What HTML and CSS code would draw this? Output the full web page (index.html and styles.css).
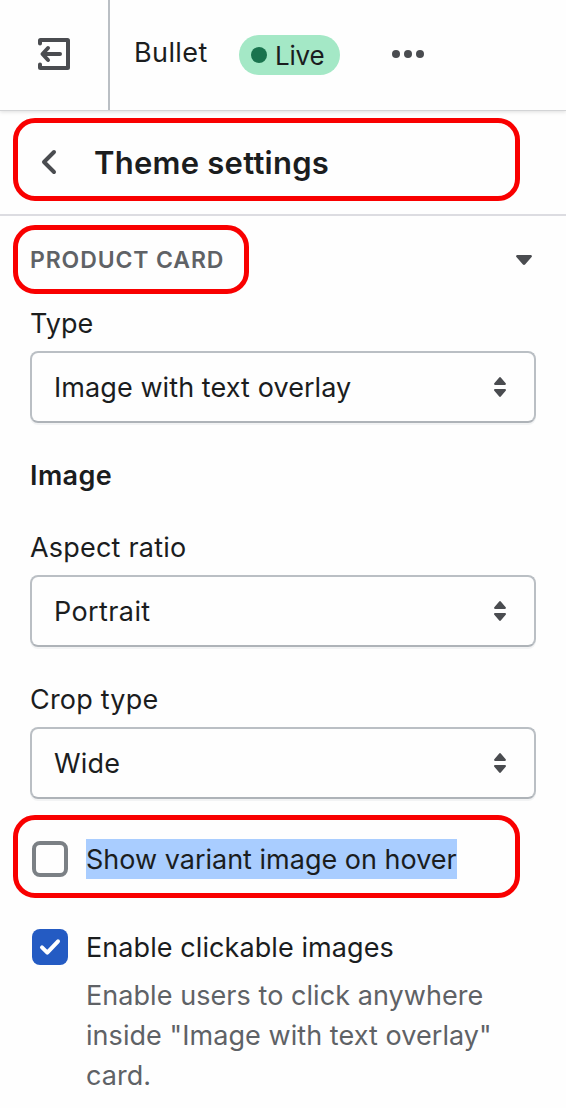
FILE: index.html
```html
<!DOCTYPE html>
<html lang="en">
<head>
<meta charset="utf-8">
<title>Theme settings</title>
<link rel="stylesheet" href="styles.css">
</head>
<body>
<header class="topbar">
  <div class="exit">
    <svg width="40" height="40" viewBox="0 0 40 40" fill="none" stroke="#4a4c50" stroke-width="4" stroke-linecap="round" stroke-linejoin="round">
      <path d="M6 9.500V6.500Q6 6 6.500 6H33.500Q34 6 34 6.500V33.500Q34 34 33.500 34H6.500Q6 34 6 33.500V30.500"/>
      <path d="M26 20H9M14 14l-5.500 6 5.500 6"/>
    </svg>
  </div>
  <div class="theme">
    <span class="theme-name">Bullet</span>
    <span class="badge"><span class="dot"></span><span class="badge-text">Live</span></span>
    <svg class="more" width="40" height="40" viewBox="0 0 40 40" fill="#4a4c50"><circle cx="8" cy="20" r="4"/><circle cx="20" cy="20" r="4"/><circle cx="32" cy="20" r="4"/></svg>
  </div>
</header>
<div class="title">
  <svg width="20" height="28" viewBox="0 0 20 28" fill="none" stroke="#4a4c50" stroke-width="4" stroke-linecap="round" stroke-linejoin="round"><path d="M14 4L4 14l10 10"/></svg>
  <h1>Theme settings</h1>
  <span class="mark mark-title"></span>
</div>
<main class="panel">
  <div class="section">
    <h2>PRODUCT CARD</h2>
    <svg width="16" height="10" viewBox="0 0 16 10" fill="#4a4c50"><path d="M1.200 0H14.800Q16.700.5 15.600 2L9.300 9.200Q8 10.700 6.700 9.200L.4 2Q-.7.5 1.200 0z"/></svg>
    <span class="mark mark-section"></span>
  </div>
  <div class="field">
    <label class="label">Type</label>
    <div class="select"><span class="value">Image with text overlay</span>
      <svg width="12" height="20" viewBox="0 0 12 20" fill="#4a4c50"><path d="M1 8Q-.5 7.600.3 6.200L5 .7Q6-.6 7 .7L11.700 6.200Q12.500 7.600 11 8z"/><path d="M1 12Q-.5 12.400.3 13.800L5 19.300Q6 20.600 7 19.300L11.700 13.800Q12.500 12.400 11 12z"/></svg>
    </div>
  </div>
  <h3>Image</h3>
  <div class="field">
    <label class="label wide">Aspect ratio</label>
    <div class="select"><span class="value wider">Portrait</span>
      <svg width="12" height="20" viewBox="0 0 12 20" fill="#4a4c50"><path d="M1 8Q-.5 7.600.3 6.200L5 .7Q6-.6 7 .7L11.700 6.200Q12.500 7.600 11 8z"/><path d="M1 12Q-.5 12.400.3 13.800L5 19.300Q6 20.600 7 19.300L11.700 13.800Q12.500 12.400 11 12z"/></svg>
    </div>
  </div>
  <div class="field">
    <label class="label wide">Crop type</label>
    <div class="select"><span class="value wide">Wide</span>
      <svg width="12" height="20" viewBox="0 0 12 20" fill="#4a4c50"><path d="M1 8Q-.5 7.600.3 6.200L5 .7Q6-.6 7 .7L11.700 6.200Q12.500 7.600 11 8z"/><path d="M1 12Q-.5 12.400.3 13.800L5 19.300Q6 20.600 7 19.300L11.700 13.800Q12.500 12.400 11 12z"/></svg>
    </div>
  </div>
  <div class="choice variant">
    <span class="box"></span>
    <span class="selected">Show variant image on hover</span>
    <span class="mark mark-variant"></span>
  </div>
  <div class="choice">
    <span class="box checked"><svg width="36" height="36" viewBox="0 0 36 36" fill="none" stroke="#fff" stroke-width="4" stroke-linecap="round" stroke-linejoin="round"><path d="M10 18.300L15.300 23.600 26 12.300"/></svg></span>
    <span class="value">Enable clickable images</span>
  </div>
  <p class="help">Enable users to click anywhere<br>inside "Image with text overlay"<br>card.</p>
</main>
</body>
</html>
```
FILE: styles.css
```css
* { box-sizing: border-box; }
body {
  margin: 0;
  width: 566px;
  height: 1108px;
  overflow: hidden;
  background: #fefefe;
  color: #1b1d1e;
  font: 400 27px/40px Inter, "Liberation Sans", sans-serif;
}
svg { display: block; flex: none; }
h1, h2, h3, p { margin: 0; }
.topbar {
  display: flex;
  height: 111px;
  border-bottom: 1px solid #d3d4d6;
  box-shadow: 0 1px 4px rgba(0, 0, 0, .13);
}
.exit {
  width: 110px;
  padding: 34px 0 0 34px;
  border-right: 2px solid #babfc4;
}
.theme { display: flex; align-items: flex-start; padding: 32px 0 0 24px; }
.theme-name { width: 105px; padding-top: 1px; letter-spacing: .4px; }
.badge {
  display: flex;
  align-items: center;
  width: 101px;
  height: 40px;
  margin-top: 3px;
  padding-left: 12px;
  border-radius: 20px;
  background: #a4e8c6;
}
.dot { width: 16px; height: 16px; margin-right: 8px; border-radius: 50%; background: #1a734e; }
.badge-text { padding-top: 2px; font-size: 26px; letter-spacing: -.2px; }
.more { margin: 2px 0 0 48px; }
.title {
  position: relative;
  display: flex;
  align-items: center;
  height: 105px;
  padding: 0 0 2px 40px;
  border-bottom: 2px solid #dcdce1;
}
h1 { margin-left: 34px; padding-top: 2px; font-size: 31px; font-weight: 600; line-height: 40px; letter-spacing: .25px; }
.mark { position: absolute; border: 5px solid #f90000; border-radius: 22px; }
.mark-title { left: 13px; top: 6.500px; width: 506.500px; height: 83px; }
.mark-section { left: -17px; top: 9px; width: 235.500px; height: 68.500px; }
.mark-variant { left: -17px; top: -24.500px; width: 506.500px; height: 83px; }
.panel { padding: 0 30px; }
.section {
  position: relative;
  display: flex;
  align-items: center;
  justify-content: space-between;
  height: 87px;
  padding-right: 4px;
}
h2 { color: #5f6266; font-size: 23px; font-weight: 600; letter-spacing: .88px; }
h3 { height: 40px; margin: 32px 0; font-size: 27px; font-weight: 600; line-height: 42px; letter-spacing: .4px; }
.field + .field { margin-top: 32px; }
.label { display: block; height: 40px; margin-bottom: 8px; line-height: 42px; }
.value { padding-top: 2px; letter-spacing: .08px; }
.wide { letter-spacing: .2px; }
.wider { letter-spacing: .4px; }
.select {
  display: flex;
  align-items: center;
  justify-content: space-between;
  height: 72px;
  width: 506px;
  padding: 0 28px 0 22px;
  border: 2px solid #babfc4;
  border-bottom-color: #aeb3b8;
  border-radius: 8px;
  box-shadow: 0 2px 0 #f2f3f4;
}
.choice { position: relative; display: flex; align-items: center; height: 40px; padding-left: 2px; margin-top: 48px; }
.variant { margin-top: 40px; }
.box { width: 36px; height: 36px; margin-right: 18px; border: 4px solid #7b8085; border-radius: 8px; }
.checked { border: 0; background: #245bc3; }
.selected { height: 40px; line-height: 42px; background: #a9cdff; }
.help { padding-top: 1px; margin: 8px 0 0 56px; color: #5f6266; white-space: nowrap; letter-spacing: .06px; }
```
